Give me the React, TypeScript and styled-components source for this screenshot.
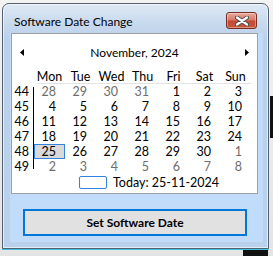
import styled, { createGlobalStyle } from 'styled-components';

const GlobalStyle = createGlobalStyle`
  html, body {
    margin: 0;
    padding: 0;
  }
  body {
    background: #ebebeb;
    font-family: Lato, "Noto Sans", "DejaVu Sans", sans-serif;
    font-size: 12.5px;
    color: #000;
    overflow: hidden;
  }
`;

const Desktop = styled.div`
  position: relative;
  width: 273px;
  height: 256px;
  box-sizing: border-box;
  padding: 3px 0 0 2px;
  background: linear-gradient(#f3f3f3, #e4e4e4);
  overflow: hidden;
`;

// dark bits of other windows peeking out behind the dialog
const BackPatch = styled.div<{ $x: number; $y: number; $w: number; $h: number }>`
  position: absolute;
  left: ${p => p.$x}px;
  top: ${p => p.$y}px;
  width: ${p => p.$w}px;
  height: ${p => p.$h}px;
  background: #111;
`;

const Window = styled.div`
  position: relative;
  width: 267px;
  height: 246px;
  box-sizing: border-box;
  display: flex;
  flex-direction: column;
  padding: 0 5px 6px 7px;
  border: 1px solid #52606f;
  border-radius: 7px 7px 0 0;
  background: linear-gradient(#dfe9f5 0, #c7d9ee 20px, #b9d1ea 36px, #b9d1ea);
  box-shadow: inset 0 0 0 1px rgba(255, 255, 255, 0.6), 0 1px 0 #3ec3e3;
`;

const TitleBar = styled.div`
  height: 29px;
  display: flex;
  align-items: flex-start;
  justify-content: space-between;
`;

const Title = styled.div`
  margin: 10px 0 0 4px;
  line-height: 16px;
  font-size: 12px;
  color: #000;
`;

const CloseButton = styled.div`
  margin: 8px 6px 0 0;
  width: 31px;
  height: 17px;
  box-sizing: border-box;
  display: flex;
  align-items: center;
  justify-content: center;
  border: 1px solid #772b22;
  border-radius: 3px;
  background: linear-gradient(#e9aa9d 0, #d77b68 45%, #c24a33 55%, #c7573e 100%);
  box-shadow: inset 0 0 0 1px rgba(255, 255, 255, 0.35);
`;

const Client = styled.div`
  flex: 1;
  display: flex;
  flex-direction: column;
  background: #c1dbfa;
`;

const Panel = styled.div`
  margin-left: 1px;
  width: 247px;
  height: 161px;
  box-sizing: border-box;
  display: flex;
  flex-direction: column;
  border: 1px solid #a0a0a0;
  background: #fff;
`;

const NavRow = styled.div`
  margin-top: 9px;
  height: 20px;
  padding: 0 8px;
  display: flex;
  align-items: center;
  justify-content: space-between;
`;

const Arrow = styled.svg`
  display: block;
  margin-bottom: 2px;
`;

const MonthTitle = styled.div`
  line-height: 20px;
  font-size: 12px;
`;

const HeaderRow = styled.div`
  margin-top: 6px;
  height: 15px;
  display: grid;
  grid-template-columns: 22px repeat(7, 31px);
  line-height: 15px;
`;

const DayName = styled.div`
  text-align: center;
`;

const Separator = styled.div`
  height: 1px;
  margin: -1px 6px 0 25px;
  background: #e3e3e3;
`;

const Body = styled.div`
  display: flex;
  height: 90px;
`;

const WeekCol = styled.div`
  width: 21px;
  display: flex;
  flex-direction: column;
`;

const WeekNum = styled.div`
  height: 15px;
  line-height: 15px;
  padding-right: 4px;
  text-align: right;
`;

const Divider = styled.div`
  width: 1px;
  margin: 3px 0 5px;
  background: #000;
`;

const DayGrid = styled.div`
  display: grid;
  grid-template-columns: repeat(7, 31px);
  grid-auto-rows: 15px;
`;

const Day = styled.div<{ $muted?: boolean; $selected?: boolean }>`
  height: 15px;
  line-height: 15px;
  padding-right: 9px;
  text-align: right;
  color: ${p => (p.$muted ? '#6d6d6d' : '#000')};
  background: ${p => (p.$selected ? '#d9d9d9' : 'transparent')};
  box-shadow: ${p => (p.$selected ? 'inset 0 0 0 1px #2f82e0' : 'none')};
`;

const TodayRow = styled.div`
  margin-top: 1px;
  height: 15px;
  padding-left: 67px;
  display: flex;
  align-items: center;
  gap: 6px;
  line-height: 15px;
`;

const TodayBox = styled.div`
  width: 28px;
  height: 13px;
  box-sizing: border-box;
  border: 1px solid #2f82e0;
  border-radius: 2px;
`;

const ActionButton = styled.button`
  margin: 15px 0 0 13px;
  width: 224px;
  height: 27px;
  box-sizing: border-box;
  border: 2px solid #0078d7;
  background: #e1e1e1;
  font-family: Lato, "Noto Sans", "DejaVu Sans", sans-serif;
  font-size: 12px;
  font-weight: 700;
  color: #000;
  padding: 0;
`;

const days = ['Mon', 'Tue', 'Wed', 'Thu', 'Fri', 'Sat', 'Sun'];

const weeks = [
  { no: 44, days: [28, 29, 30, 31, 1, 2, 3] },
  { no: 45, days: [4, 5, 6, 7, 8, 9, 10] },
  { no: 46, days: [11, 12, 13, 14, 15, 16, 17] },
  { no: 47, days: [18, 19, 20, 21, 22, 23, 24] },
  { no: 48, days: [25, 26, 27, 28, 29, 30, 1] },
  { no: 49, days: [2, 3, 4, 5, 6, 7, 8] },
];

export default function App() {
  return (
    <>
      <GlobalStyle />
      <Desktop>
        <BackPatch $x={270} $y={96} $w={3} $h={42} />
        <BackPatch $x={243} $y={250} $w={25} $h={6} />
        <Window>
          <TitleBar>
            <Title>Software Date Change</Title>
            <CloseButton>
              <svg width="14" height="10" viewBox="0 0 14 10">
                <path d="M2 1.5 L12 8.5 M12 1.5 L2 8.5" stroke="#4a4a4a" strokeWidth="4" strokeLinecap="round" />
                <path d="M2 1.5 L12 8.5 M12 1.5 L2 8.5" stroke="#fff" strokeWidth="2.2" strokeLinecap="round" />
              </svg>
            </CloseButton>
          </TitleBar>
          <Client>
            <Panel>
              <NavRow>
                <Arrow width="4" height="7" viewBox="0 0 4 7">
                  <polygon points="4,0 0,3.5 4,7" fill="#000" />
                </Arrow>
                <MonthTitle>November, 2024</MonthTitle>
                <Arrow width="4" height="7" viewBox="0 0 4 7">
                  <polygon points="0,0 4,3.5 0,7" fill="#000" />
                </Arrow>
              </NavRow>
              <HeaderRow>
                <span />
                {days.map(d => (
                  <DayName key={d}>{d}</DayName>
                ))}
              </HeaderRow>
              <Separator />
              <Body>
                <WeekCol>
                  {weeks.map(w => (
                    <WeekNum key={w.no}>{w.no}</WeekNum>
                  ))}
                </WeekCol>
                <Divider />
                <DayGrid>
                  {weeks.map((w, wi) =>
                    w.days.map((d, di) => {
                      const muted = (wi === 0 && d > 20) || (wi >= 4 && d < 10);
                      const selected = wi === 4 && d === 25;
                      return (
                        <Day key={`${wi}-${di}`} $muted={muted} $selected={selected}>
                          {d}
                        </Day>
                      );
                    })
                  )}
                </DayGrid>
              </Body>
              <TodayRow>
                <TodayBox />
                <span>Today: 25-11-2024</span>
              </TodayRow>
            </Panel>
            <ActionButton>Set Software Date</ActionButton>
          </Client>
        </Window>
      </Desktop>
    </>
  );
}
